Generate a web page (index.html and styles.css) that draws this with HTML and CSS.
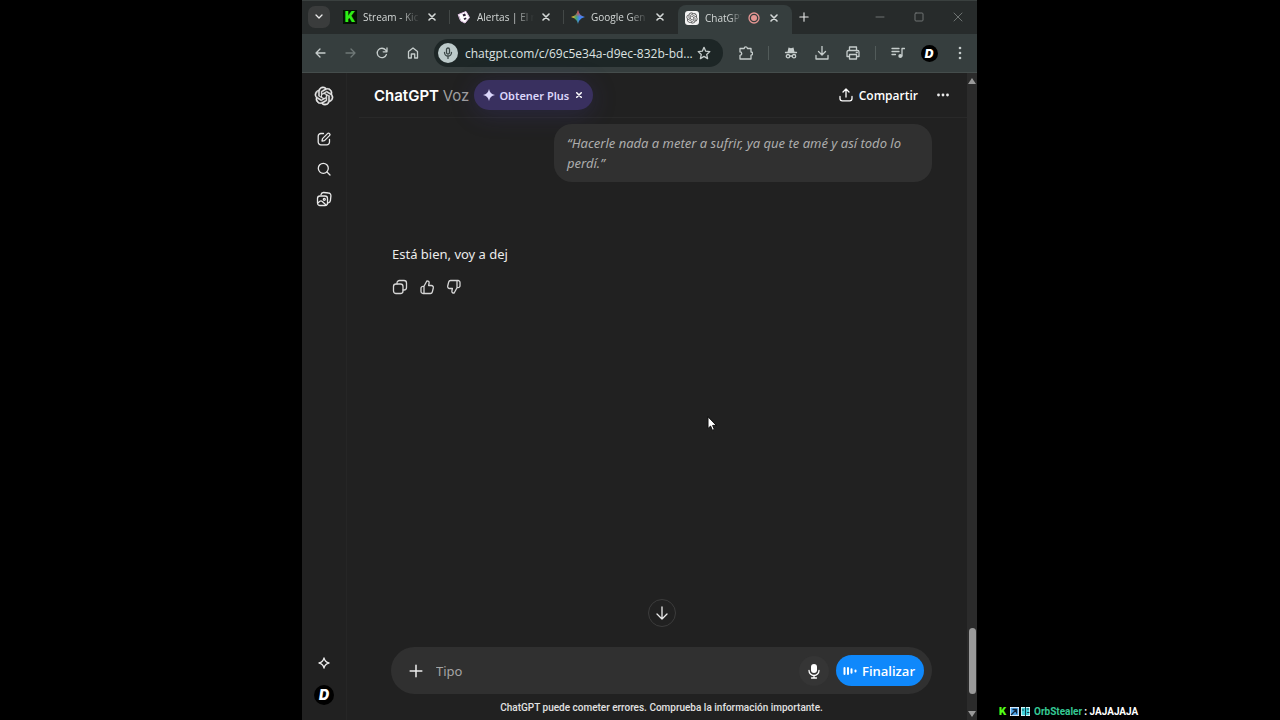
FILE: index.html
```html
<!DOCTYPE html>
<html lang="es">
<head>
    <meta charset="UTF-8">
    <meta name="viewport" content="width=device-width, initial-scale=1.0">
    <title>ChatGPT Voz</title>
    <link rel="stylesheet" href="styles.css">
</head>
<body>

<!-- Shared icons -->
<svg class="sprite" aria-hidden="true">
    <symbol id="i-openai" viewBox="-1 -1 26 26"><path fill="currentColor" d="M22.2819 9.8211a5.9847 5.9847 0 0 0-.5157-4.9108 6.0462 6.0462 0 0 0-6.5098-2.9A6.0651 6.0651 0 0 0 4.9807 4.1818a5.9847 5.9847 0 0 0-3.9977 2.9 6.0462 6.0462 0 0 0 .7427 7.0966 5.98 5.98 0 0 0 .511 4.9107 6.051 6.051 0 0 0 6.5146 2.9001A5.9847 5.9847 0 0 0 13.2599 24a6.0557 6.0557 0 0 0 5.7718-4.2058 5.9894 5.9894 0 0 0 3.9977-2.9001 6.0557 6.0557 0 0 0-.7475-7.0729zm-9.022 12.6081a4.4755 4.4755 0 0 1-2.8764-1.0408l.1419-.0804 4.7783-2.7582a.7948.7948 0 0 0 .3927-.6813v-6.7369l2.02 1.1686a.071.071 0 0 1 .038.052v5.5826a4.504 4.504 0 0 1-4.4945 4.4944zm-9.6607-4.1254a4.4708 4.4708 0 0 1-.5346-3.0137l.142.0852 4.783 2.7582a.7712.7712 0 0 0 .7806 0l5.8428-3.3685v2.3324a.0804.0804 0 0 1-.0332.0615L9.74 19.9502a4.4992 4.4992 0 0 1-6.1408-1.6464zM2.3408 7.8956a4.485 4.485 0 0 1 2.3655-1.9728V11.6a.7664.7664 0 0 0 .3879.6765l5.8144 3.3543-2.0201 1.1685a.0757.0757 0 0 1-.071 0l-4.8303-2.7865A4.504 4.504 0 0 1 2.3408 7.872zm16.5963 3.8558L13.1038 8.364 15.1192 7.2a.0757.0757 0 0 1 .071 0l4.8303 2.7913a4.4944 4.4944 0 0 1-.6765 8.1042v-5.6772a.79.79 0 0 0-.407-.667zm2.0107-3.0231l-.142-.0852-4.7735-2.7818a.7759.7759 0 0 0-.7854 0L9.409 9.2297V6.8974a.0662.0662 0 0 1 .0284-.0615l4.8303-2.7866a4.4992 4.4992 0 0 1 6.6802 4.66zM8.3065 12.863l-2.02-1.1638a.0804.0804 0 0 1-.038-.0567V6.0742a4.4992 4.4992 0 0 1 7.3757-3.4537l-.142.0805L8.704 5.459a.7948.7948 0 0 0-.3927.6813zm1.0976-2.3654l2.602-1.4998 2.6069 1.4998v2.9994l-2.5974 1.4997-2.6067-1.4997Z"/></symbol>
    <symbol id="i-close" viewBox="0 0 8 8"><path d="M1 1l6 6M7 1L1 7"/></symbol>
    <symbol id="i-plus" viewBox="0 0 12 12"><path d="M6 1v10M1 6h10"/></symbol>
</svg>

<div class="stage">

    <!-- Browser window -->
    <div class="browser">

        <div class="tab-strip">
            <button class="tab-search" aria-label="Buscar pestañas">
                <svg width="8" height="6" viewBox="0 0 8 6"><path d="M1 1l3 3 3-3"/></svg>
            </button>
            <div class="tabs">
                <div class="tab">
                    <span class="favicon kick">K</span>
                    <span class="tab-title">Stream - Kic</span>
                    <button class="tab-close" aria-label="Cerrar"><svg width="8" height="8"><use href="#i-close"/></svg></button>
                </div>
                <div class="tab">
                    <svg class="favicon" viewBox="0 0 14 14">
                        <path d="M1.500 4.500L9 1.500l3.500 6L8 13l-4-2z" fill="#fff" stroke="#e3c3e6" stroke-width="1"/>
                        <path d="M5.500 4.500l2.500-1 1 2-2.500 1zM6.500 8.500l2.500-1 .5 1.500-2 1z" fill="#2b1c34" stroke="none"/>
                    </svg>
                    <span class="tab-title">Alertas | El n</span>
                    <button class="tab-close" aria-label="Cerrar"><svg width="8" height="8"><use href="#i-close"/></svg></button>
                </div>
                <div class="tab">
                    <svg class="favicon" viewBox="0 0 14 14">
                        <defs>
                            <linearGradient id="gem" x1="0" y1="0" x2="1" y2="0">
                                <stop offset="0.1" stop-color="#f2c12e"/>
                                <stop offset="0.35" stop-color="#45a66a"/>
                                <stop offset="0.6" stop-color="#4285f4"/>
                            </linearGradient>
                            <linearGradient id="gem-top" x1="0" y1="0" x2="0" y2="1">
                                <stop offset="0.1" stop-color="#ea4335"/>
                                <stop offset="0.5" stop-color="#ea4335" stop-opacity="0"/>
                            </linearGradient>
                        </defs>
                        <path d="M7 0c1 4 3 6 7 7-4 1-6 3-7 7-1-4-3-6-7-7 4-1 6-3 7-7z" fill="url(#gem)" stroke="none"/>
                        <path d="M7 0c1 4 3 6 7 7-4 1-6 3-7 7-1-4-3-6-7-7 4-1 6-3 7-7z" fill="url(#gem-top)" stroke="none"/>
                    </svg>
                    <span class="tab-title">Google Gen</span>
                    <button class="tab-close" aria-label="Cerrar"><svg width="8" height="8"><use href="#i-close"/></svg></button>
                </div>
                <div class="tab active">
                    <span class="favicon gpt"><svg width="12" height="12"><use href="#i-openai"/></svg></span>
                    <span class="tab-title">ChatGPT</span>
                    <svg class="recording" width="12" height="12" viewBox="0 0 12 12"><circle cx="6" cy="6" r="5"/><circle class="dot" cx="6" cy="6" r="3"/></svg>
                    <button class="tab-close" aria-label="Cerrar"><svg width="8" height="8"><use href="#i-close"/></svg></button>
                </div>
            </div>
            <button class="new-tab" aria-label="Nueva pestaña"><svg width="10" height="10"><use href="#i-plus"/></svg></button>
            <div class="window-controls">
                <button aria-label="Minimizar"><svg width="10" height="10" viewBox="0 0 10 10"><path d="M1 5h8"/></svg></button>
                <button aria-label="Maximizar"><svg width="10" height="10" viewBox="0 0 10 10"><rect x="1" y="1" width="8" height="8" rx="1"/></svg></button>
                <button aria-label="Cerrar ventana"><svg width="10" height="10" viewBox="0 0 10 10"><path d="M1 1l8 8M9 1L1 9"/></svg></button>
            </div>
        </div>

        <div class="toolbar">
            <button aria-label="Atrás"><svg width="12" height="12" viewBox="0 0 12 12"><path d="M11 6H2M6 2L2 6l4 4"/></svg></button>
            <button class="off" aria-label="Adelante" disabled><svg width="12" height="12" viewBox="0 0 12 12"><path d="M1 6h9M6 2l4 4-4 4"/></svg></button>
            <button aria-label="Recargar"><svg width="12" height="12" viewBox="0 0 12 12"><path d="M10.400 7.500A4.700 4.700 0 1 1 9.600 3L11 4.600M11 1v3.800H7.200"/></svg></button>
            <button aria-label="Inicio"><svg width="12" height="12" viewBox="0 0 12 12"><path d="M1.500 4.500L6 1l4.500 3.500V11H7.700V7H4.300v4H1.500z"/></svg></button>

            <div class="omnibox">
                <span class="mic-badge">
                    <svg width="12" height="12" viewBox="0 0 12 12"><rect x="4.500" y="1" width="3" height="6" rx="1.500"/><path d="M2.500 5.500a3.500 3.500 0 0 0 7 0M6 9v2.500"/></svg>
                </span>
                <input class="url" type="text" aria-label="Dirección" value="chatgpt.com/c/69c5e34a-d9ec-832b-bd...">
                <button class="star" aria-label="Favorito"><svg width="14" height="14" viewBox="0 0 14 14"><path d="M7 1.300l1.700 3.900 4.100.4-3.100 2.800.9 4.200L7 10.400l-3.600 2.200.9-4.200L1.200 5.600l4.100-.4z"/></svg></button>
            </div>

            <button aria-label="Extensiones"><svg width="14" height="14" viewBox="0 0 14 14"><path d="M1 2.500h4.200a1.600 1.600 0 0 1 3.200 0H12V6a1.600 1.600 0 0 1 0 3.200V13H1V9.300a1.700 1.700 0 0 0 0-3.400z"/></svg></button>
            <span class="sep"></span>
            <button aria-label="Incógnito"><svg width="14" height="14" viewBox="0 0 14 14"><path class="solid" d="M3.500 6l1-4.500 2.500.7 2.500-.7 1 4.500z"/><path d="M1.500 6.500h11M5.600 10h2.800"/><circle cx="4" cy="10.200" r="1.700"/><circle cx="10" cy="10.200" r="1.700"/></svg></button>
            <button aria-label="Descargas"><svg width="14" height="14" viewBox="0 0 14 14"><path d="M7 0v8.500M3.500 5.500L7 9l3.500-3.500M1 9.500V13h12V9.500"/></svg></button>
            <button aria-label="Imprimir"><svg width="14" height="14" viewBox="0 0 14 14"><path d="M3.500 4V1h7v3M3.500 10.500H1V6q0-1.500 1.500-1.500h9Q13 4.500 13 6v4.500h-2.500M3.500 8.500h7V13h-7zM10.300 6.500h1"/></svg></button>
            <span class="sep"></span>
            <button aria-label="Multimedia"><svg width="14" height="14" viewBox="0 0 14 14"><path d="M1 2.500h7M1 5.500h7M1 8.500h3.500M13.500 2.500H11V10"/><circle class="solid" cx="9.300" cy="10" r="2"/></svg></button>
            <button aria-label="Perfil"><span class="avatar small">D</span></button>
            <button aria-label="Menú"><svg width="4" height="14" viewBox="0 0 4 14"><g fill="currentColor" stroke="none"><circle cx="2" cy="2" r="1.300"/><circle cx="2" cy="7" r="1.300"/><circle cx="2" cy="12" r="1.300"/></g></svg></button>
        </div>

        <!-- Page -->
        <div class="page">
            <nav class="sidebar">
                <a href="#" class="logo" aria-label="Inicio"><svg width="20" height="20"><use href="#i-openai"/></svg></a>
                <a href="#" class="first" aria-label="Nuevo chat"><svg width="14" height="14" viewBox="0 0 14 14"><path d="M6.500 1.500H4A2.700 2.700 0 0 0 1.200 4.200v5.800A2.700 2.700 0 0 0 4 12.800h5.800a2.700 2.700 0 0 0 2.700-2.800V7.500M5 9l.5-2.400 5-5a1.300 1.300 0 0 1 2 2l-5 5z"/></svg></a>
                <a href="#" aria-label="Buscar"><svg width="14" height="14" viewBox="0 0 14 14"><circle cx="6.300" cy="6.300" r="5"/><path d="M10 10l3 3"/></svg></a>
                <a href="#" aria-label="Imágenes"><svg width="16" height="16" viewBox="0 0 16 16"><path d="M5 3.600A2.600 2.600 0 0 1 7.700 1.500l4.800.5a2.600 2.600 0 0 1 2.400 2.900l-.5 4.800a2.600 2.600 0 0 1-2 2.200"/><rect x="1.500" y="5" width="10" height="9.500" rx="2.500"/><path d="M2 11.700l2-1.500c1-.7 1.600-.3 2.300.3l3.700 3.500"/><circle cx="8.300" cy="8.300" r="1"/></svg></a>
                <a href="#" class="upgrade" aria-label="Mejorar plan"><svg width="12" height="12" viewBox="0 0 12 12"><path d="M6 1c.7 3 2 4.300 5 5-3 .7-4.300 2-5 5-.7-3-2-4.300-5-5 3-.7 4.300-2 5-5z"/></svg></a>
                <a href="#" aria-label="Cuenta"><span class="avatar">D</span></a>
            </nav>

            <main class="chat">
                <header class="chat-header">
                    <h1 class="model">ChatGPT <span>Voz</span></h1>
                    <button class="plus-pill">
                        <svg width="12" height="12" viewBox="0 0 12 12"><path class="solid" d="M6 0c.7 3.600 2.400 5.300 6 6-3.600.7-5.300 2.400-6 6-.7-3.600-2.400-5.300-6-6 3.600-.7 5.300-2.400 6-6z"/></svg>
                        Obtener Plus
                        <svg class="pill-close" width="6" height="6"><use href="#i-close"/></svg>
                    </button>
                    <button class="share">
                        <svg width="14" height="14" viewBox="0 0 14 14"><path d="M7 9V1.500M4 4l3-3 3 3M1 8.500V10.500A2.300 2.300 0 0 0 3.300 12.800h7.400a2.300 2.300 0 0 0 2.300-2.300V8.500"/></svg>
                        Compartir
                    </button>
                    <button class="more" aria-label="Más"><svg width="14" height="4" viewBox="0 0 14 4"><g fill="currentColor" stroke="none"><circle cx="2.500" cy="2" r="1.400"/><circle cx="7" cy="2" r="1.400"/><circle cx="11.500" cy="2" r="1.400"/></g></svg></button>
                </header>

                <div class="thread">
                    <p class="bubble">“Hacerle nada a meter a sufrir, ya que te amé y así todo lo perdí.”</p>
                    <p class="reply">Está bien, voy a dej</p>
                    <div class="actions">
                        <button aria-label="Copiar"><svg width="16" height="16" viewBox="0 0 16 16"><rect x="1.500" y="5" width="9.500" height="9.500" rx="2.500"/><path d="M5 5V4a2.500 2.500 0 0 1 2.500-2.500H12A2.500 2.500 0 0 1 14.500 4v4.500A2.500 2.500 0 0 1 12 11h-1"/></svg></button>
                        <button aria-label="Buena respuesta"><svg width="16" height="16" viewBox="0 0 16 16"><path id="thumb" d="M5 7.300L8 1.800c1.500 0 2.400 1 2.100 2.400L9.600 6.500h2.700a2 2 0 0 1 2 2.500l-1 4a2 2 0 0 1-2 1.500H4A2 2 0 0 1 2 12.500V9.300a2 2 0 0 1 2-2h1zM5 7.300v7"/></svg></button>
                        <button aria-label="Mala respuesta"><svg width="16" height="16" viewBox="0 0 16 16"><use href="#thumb" transform="rotate(180 8 8)"/></svg></button>
                    </div>
                </div>

                <button class="scroll-down" aria-label="Bajar"><svg width="14" height="14" viewBox="0 0 14 14"><path d="M7 1v12M2 8l5 5 5-5"/></svg></button>

                <form class="composer">
                    <button type="button" class="attach" aria-label="Añadir"><svg width="14" height="14"><use href="#i-plus"/></svg></button>
                    <input type="text" placeholder="Tipo" aria-label="Mensaje">
                    <button type="button" class="mic" aria-label="Micrófono"><svg width="14" height="16" viewBox="0 0 14 16"><rect class="solid" x="4" y="1" width="6" height="9" rx="3"/><path d="M2 7.500a5 5 0 0 0 10 0M7 12.500V15M4.500 15h5"/></svg></button>
                    <button type="button" class="finish">
                        <svg width="14" height="8" viewBox="0 0 14 8"><path d="M1.500 1v6M5 1v6M8.500 2.300v3.400M12.500 3.500v1"/></svg>
                        Finalizar
                    </button>
                </form>
                <p class="notice">ChatGPT puede cometer errores. Comprueba la información importante.</p>
            </main>

            <div class="scrollbar" aria-hidden="true">
                <svg width="8" height="6" viewBox="0 0 8 6"><path d="M4 0l4 6H0z"/></svg>
                <span class="thumb"></span>
                <svg width="8" height="6" viewBox="0 0 8 6"><path d="M0 0h8L4 6z"/></svg>
            </div>

            <svg class="cursor" width="10" height="16" viewBox="0 0 10 16"><path d="M1 1v11.500l2.600-2.400 1.800 4.200 2-.9-1.800-4H9z"/></svg>
        </div>
    </div>

    <!-- Stream chat overlay -->
    <div class="overlay">
        <span class="badge green">K</span>
        <svg class="badge" viewBox="0 0 9 9"><rect width="9" height="9" rx="1" fill="#4aa3e8"/><path d="M1.500 7.500l2-2 3-3M3 2.500h3.500V6" stroke="#10243a"/></svg>
        <svg class="badge" viewBox="0 0 9 9"><rect width="9" height="9" rx="1" fill="#3fd0d8"/><path d="M4.500 0v9M1.500 3h1M6.500 5.500H8M6.500 2h1" stroke="#0d3a48" stroke-width="1"/></svg>
        <span class="user">OrbStealer</span>
        <span>: JAJAJAJA</span>
    </div>
</div>

</body>
</html>
```
FILE: styles.css
```css
* {
    box-sizing: border-box;
}

body {
    margin: 0;
    background: #000;
    color: #ececec;
    font-family: "Noto Sans", "Open Sans", sans-serif;
    font-size: 13px;
}

button, input {
    margin: 0;
    padding: 0;
    border: 0;
    background: none;
    color: inherit;
    font: inherit;
}

button {
    display: flex;
    align-items: center;
    justify-content: center;
    flex: none;
}

p, h1 {
    margin: 0;
}

svg {
    display: block;
    flex: none;
    fill: none;
    stroke: currentColor;
    stroke-width: 1.3;
    stroke-linecap: round;
    stroke-linejoin: round;
}

.gpt svg {
    stroke: none;
}

.logo svg {
    stroke-width: 0.6;
}

.solid {
    fill: currentColor;
    stroke: none;
}

.sprite {
    position: absolute;
    width: 0;
    height: 0;
}

.stage {
    display: grid;
    grid-template-columns: 302fr 675fr 303fr;
    height: 100vh;
}

.browser {
    grid-column: 2;
    display: flex;
    flex-direction: column;
    min-width: 0;
    height: 100vh;
    background: #212121;
}

/* Tab strip */
.tab-strip {
    display: flex;
    align-items: center;
    height: 34px;
    padding-left: 6px;
    background: #272b2b;
    box-shadow: inset 0 1px #3a403f;
}

.tab-search {
    width: 22px;
    height: 22px;
    border-radius: 7px;
    background: #3a3c3c;
}

.tabs {
    display: flex;
    align-self: stretch;
    padding-left: 6px;
}

.tab {
    display: flex;
    align-items: center;
    gap: 6px;
    width: 114px;
    padding: 0 12px 0 7px;
    background: linear-gradient(#434847, #434847) right center / 1px 14px no-repeat;
    color: #d4d8d7;
    font-family: "Open Sans", sans-serif;
    font-size: 10px;
}

.tab:nth-child(3) {
    background: none;
}

.tab.active {
    align-self: flex-end;
    height: 29px;
    padding-bottom: 4px;
    border-radius: 8px 8px 0 0;
    background: #363e3e;
}

.favicon {
    flex: none;
    width: 14px;
    height: 14px;
}

.kick {
    background: #041203;
    color: #2fee16;
    font: 900 14px/14px Inter, sans-serif;
    text-align: center;
}

.gpt {
    display: flex;
    align-items: center;
    justify-content: center;
    border-radius: 3px;
    background: #f2f2f2;
    color: #444;
}

.tab-title {
    flex: 1;
    min-width: 0;
    white-space: nowrap;
    -webkit-mask-image: linear-gradient(90deg, #000 65%, transparent);
    mask-image: linear-gradient(90deg, #000 65%, transparent);
}

.recording {
    margin-right: 2px;
    color: #e59693;
}

.recording .dot {
    fill: currentColor;
    stroke: none;
}

.tab-close {
    width: 12px;
    height: 12px;
}

.tab-close svg {
    stroke-width: 1.6;
}

.new-tab {
    width: 24px;
    height: 24px;
}

.window-controls {
    display: flex;
    margin-left: auto;
    color: #6e7372;
}

.window-controls svg {
    stroke-width: 1;
}

.window-controls button {
    width: 39px;
    height: 34px;
}

/* Toolbar */
.toolbar {
    display: flex;
    align-items: center;
    gap: 1px;
    height: 39px;
    padding: 0 2px 0 3px;
    border-bottom: 1px solid #454d4c;
    background: #363e3e;
    color: #c6cdcc;
}

.toolbar > button {
    width: 30px;
    height: 28px;
}

.toolbar .off {
    color: #6f7877;
}

.omnibox {
    display: flex;
    align-items: center;
    flex: 1;
    min-width: 0;
    height: 28px;
    margin: 0 7px 0 5px;
    padding: 0 11px 0 4px;
    border-radius: 14px;
    background: #1d2626;
}

.mic-badge {
    display: flex;
    align-items: center;
    justify-content: center;
    flex: none;
    width: 20px;
    height: 20px;
    border-radius: 50%;
    background: #bccaca;
    color: #3a4646;
}

.url {
    flex: 1;
    min-width: 0;
    padding-left: 7px;
    color: #dde3e2;
    font-family: "Open Sans", sans-serif;
    font-size: 12px;
}

.star {
    width: 16px;
    height: 28px;
}

.sep {
    width: 1px;
    height: 14px;
    margin: 0 6px;
    background: #525b5a;
}

.avatar {
    display: block;
    width: 20px;
    height: 20px;
    border-radius: 50%;
    background: #000;
    color: #fff;
    font: italic 900 14px/20px Inter, sans-serif;
    text-align: center;
}

.avatar.small {
    width: 17px;
    height: 17px;
    font-size: 12px;
    line-height: 17px;
}

/* Page */
.page {
    position: relative;
    display: flex;
    flex: 1;
    min-height: 0;
}

.sidebar {
    display: flex;
    flex-direction: column;
    align-items: center;
    width: 45px;
    padding: 8px 0 10px;
    border-right: 1px solid #262626;
}

.sidebar a {
    display: flex;
    align-items: center;
    justify-content: center;
    width: 30px;
    height: 30px;
    color: #e8e8e8;
    text-decoration: none;
}

.sidebar .first {
    margin-top: 13px;
}

.sidebar .upgrade {
    margin-top: auto;
    margin-bottom: 2px;
}

.chat {
    display: flex;
    flex-direction: column;
    flex: 1;
    min-width: 0;
}

.chat-header {
    display: flex;
    align-items: center;
    height: 45px;
    margin-left: 12px;
    padding: 0 12px 0 15px;
    border-bottom: 1px solid #292929;
}

.model {
    color: #fff;
    font: 600 15px/25px Inter, sans-serif;
}

.model span {
    color: #a0a0a0;
    font-weight: 400;
}

.plus-pill {
    gap: 4px;
    height: 30px;
    margin-left: 5px;
    padding: 0 11px 0 9px;
    border-radius: 15px;
    background: #39305f;
    box-shadow: 0 4px 24px rgba(70, 60, 160, 0.25);
    color: #dcd7fb;
    font-size: 11px;
    font-weight: 600;
}

.pill-close {
    margin-left: 3px;
    stroke-width: 2;
    color: #fff;
}

.share {
    gap: 6px;
    margin-left: auto;
    color: #fff;
    font-family: "Open Sans", sans-serif;
    font-size: 12px;
    font-weight: 600;
}

.more {
    width: 24px;
    height: 24px;
    margin-left: 13px;
}

.thread {
    flex: 1;
    min-height: 0;
    padding: 6px 35px 0 45px;
}

.bubble {
    width: 70%;
    margin-left: auto;
    padding: 9px 13px;
    border-radius: 18px;
    background: #303030;
    color: #adadad;
    font-style: italic;
    line-height: 20px;
}

.reply {
    margin-top: 62px;
    line-height: 20px;
}

.actions {
    display: flex;
    gap: 11px;
    margin-top: 15px;
    color: #d6d6d6;
}

.scroll-down {
    align-self: center;
    width: 28px;
    height: 28px;
    margin: 0 0 20px 9px;
    border: 1px solid #3c3c3c;
    border-radius: 50%;
}

.composer {
    display: flex;
    align-items: center;
    height: 47px;
    margin: 0 35px 0 44px;
    padding: 0 8px 0 11px;
    border-radius: 24px;
    background: #303030;
}

.attach {
    width: 28px;
    height: 28px;
}

.composer input {
    flex: 1;
    min-width: 0;
    padding-left: 6px;
    outline: none;
}

.composer input::placeholder {
    color: #a5a5a5;
    opacity: 1;
}

.mic {
    width: 30px;
    height: 30px;
    border-radius: 50%;
    background: #353535;
    color: #fff;
}

.finish {
    gap: 5px;
    height: 31px;
    margin-left: 7px;
    padding: 0 9px 0 7px;
    border-radius: 16px;
    background: #0f88fb;
    color: #fff;
    font-family: "Open Sans", sans-serif;
    font-weight: 600;
}

.finish svg {
    stroke-width: 2;
}

.notice {
    padding: 6px 0 5px 9px;
    color: #e2e2e2;
    font-family: Roboto, sans-serif;
    font-size: 10px;
    font-weight: 500;
    line-height: 15px;
    text-align: center;
}

.scrollbar {
    display: flex;
    flex-direction: column;
    align-items: center;
    width: 10px;
    padding: 5px 0 3px;
    background: #2b2b2b;
    color: #9a9a9a;
}

.scrollbar path {
    fill: currentColor;
    stroke: none;
}

.thumb {
    width: 7px;
    height: 66px;
    margin: auto 0 17px;
    border-radius: 4px;
    background: #9a9a9a;
}

.cursor {
    position: absolute;
    top: 343px;
    left: 405px;
}

.cursor path {
    fill: #fff;
    stroke: #111;
    stroke-width: 1;
}

/* Stream chat overlay */
.overlay {
    grid-column: 3;
    display: flex;
    align-items: center;
    align-self: end;
    gap: 2px;
    height: 17px;
    padding-left: 22px;
    color: #fff;
    font: 700 10px/17px Roboto, sans-serif;
}

.badge {
    width: 9px;
    height: 9px;
    font: 900 10px/9px Inter, sans-serif;
}

.green {
    color: #53fc18;
}

.user {
    margin-left: 2px;
    color: #35c994;
}
```
